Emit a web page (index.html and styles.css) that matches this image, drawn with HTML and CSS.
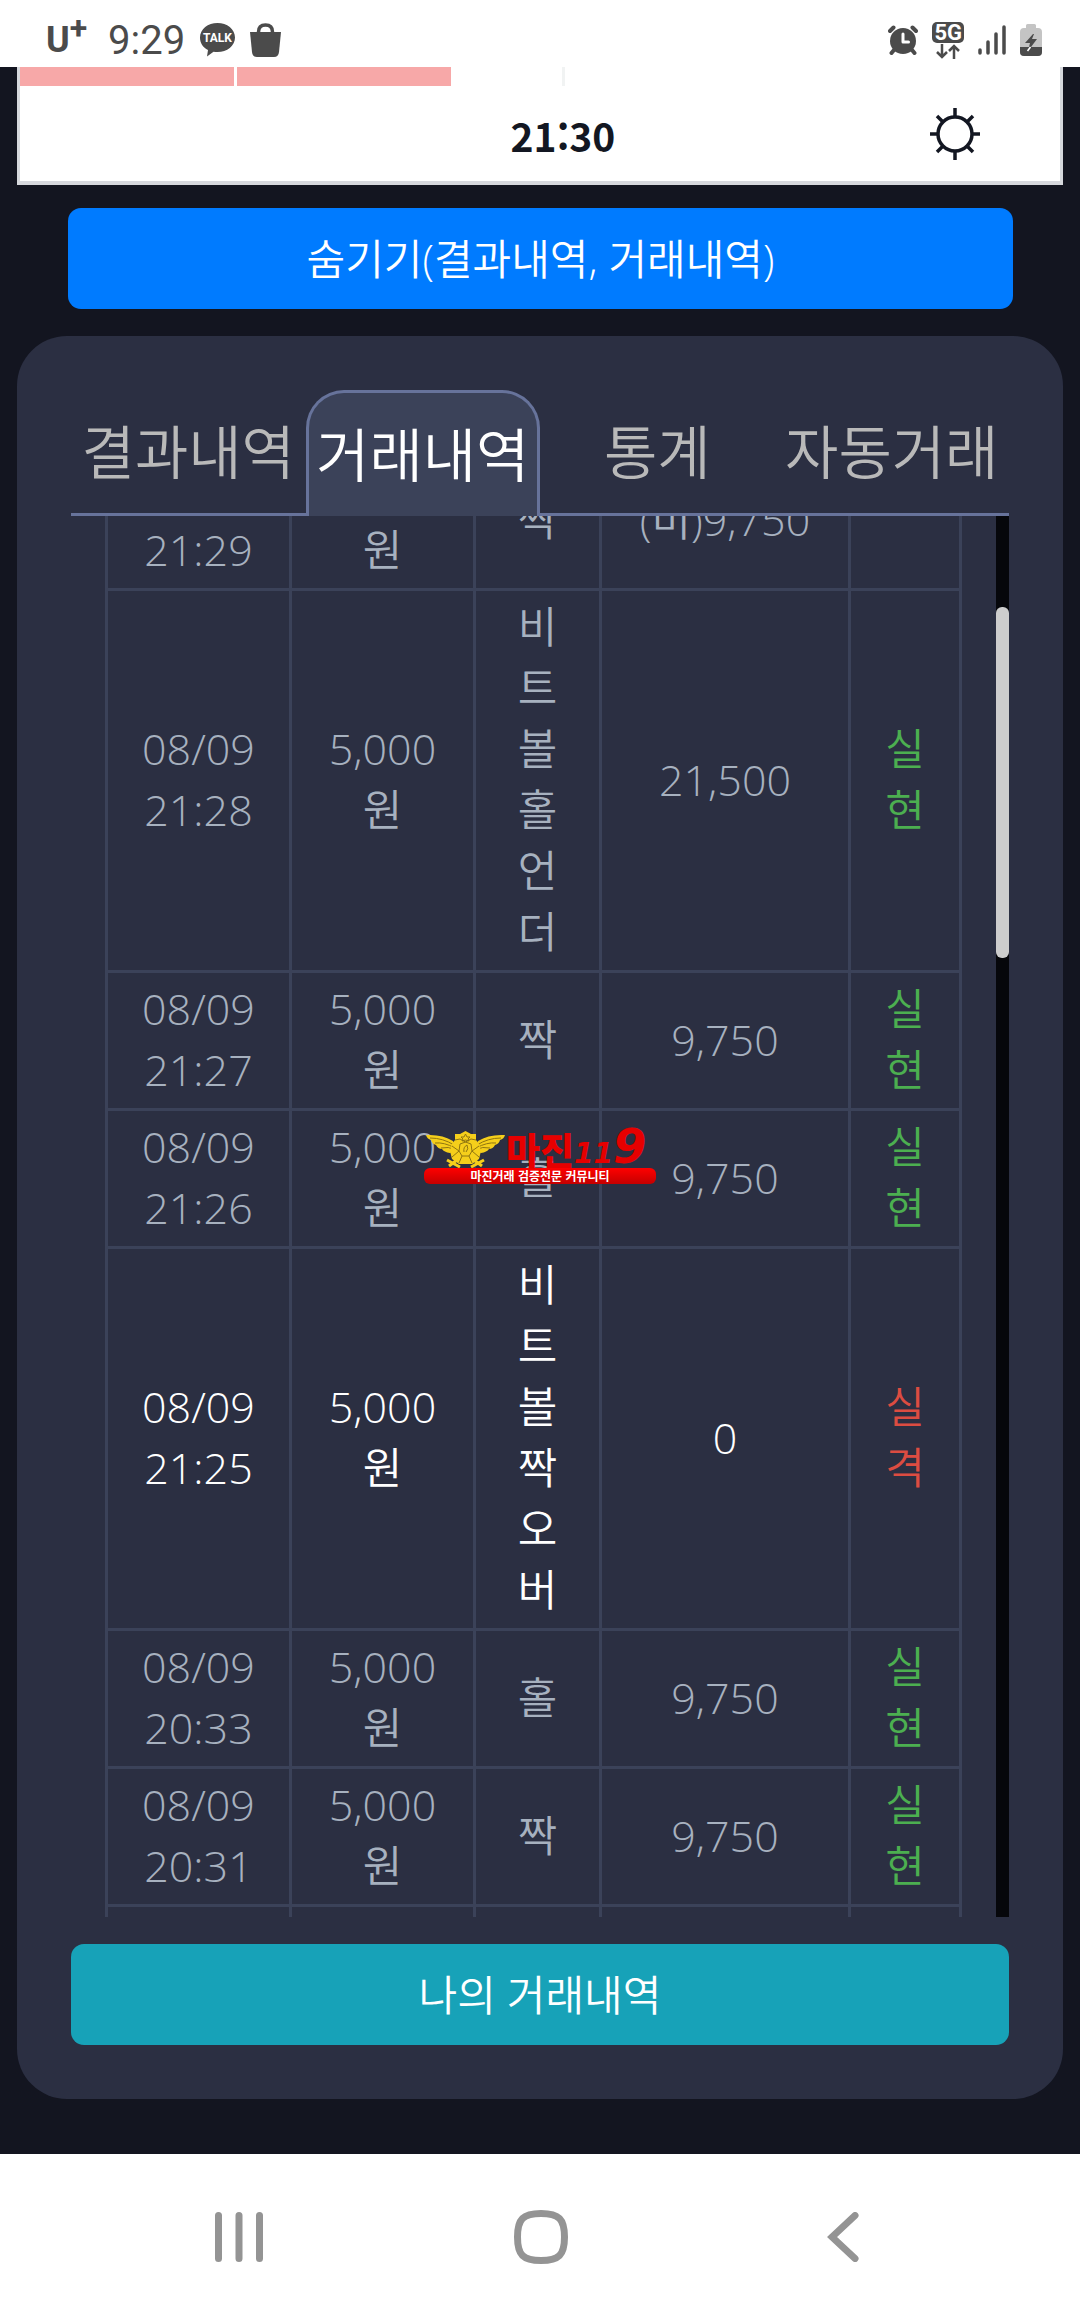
FILE: index.html
```html
<!DOCTYPE html>
<html lang="ko">
<head>
<meta charset="utf-8">
<meta name="viewport" content="width=device-width, initial-scale=1">
<title>거래내역</title>
<link rel="stylesheet" href="styles.css">
</head>
<body>
<header class="status">
  <div class="status-left">
    <span class="carrier">U<sup class="carrier-plus">+</sup></span>
    <span class="clock">9:29</span>
    <span class="talk">
      <svg width="35" height="34" viewBox="0 0 35 34" aria-hidden="true"><path fill="#4b4b4b" d="M17.500 0C27 0 35 6 35 14.500C35 23 27 29 17.500 29C16 29 15 29 13.500 28.700L7 33.500L8 27C3 24.500 0 20 0 14.500C0 6 8 0 17.500 0Z"/></svg>
      <span class="talk-label">TALK</span>
    </span>
    <svg width="31" height="34" viewBox="0 0 31 34" aria-hidden="true"><path fill="#4b4b4b" d="M0 9H31L29 29Q28.500 34 24 34H7Q2.500 34 2 29Z"/><path fill="none" stroke="#4b4b4b" stroke-width="3.500" d="M8.500 11V9Q8.500 2 15.500 2T22.500 9V11"/></svg>
  </div>
  <div class="status-right">
    <svg width="30" height="30" viewBox="0 0 30 30" aria-hidden="true"><circle cx="15" cy="16" r="13" fill="#4b4b4b"/><path stroke="#4b4b4b" stroke-width="4" stroke-linecap="round" fill="none" d="M2 6L5.500 2.500M28 6L24.500 2.500M6 25L3.500 28M24 25L26.500 28"/><path fill="none" stroke="#fff" stroke-width="3" stroke-linecap="round" stroke-linejoin="round" d="M15 9V17H20.500"/></svg>
    <span class="fiveg">
      <span class="fiveg-label">5G</span>
      <svg width="24" height="15" viewBox="0 0 24 15" aria-hidden="true"><path fill="none" stroke="#4b4b4b" stroke-width="2.500" d="M6 0V13M1 8L6 13L11 8M18 15V2M13 7L18 2L23 7"/></svg>
    </span>
    <svg width="28" height="30" viewBox="0 0 28 30" aria-hidden="true"><path stroke="#4b4b4b" stroke-width="3.500" stroke-linecap="round" d="M2 25V28M10 17V28M18 9V28M26 2V28"/></svg>
    <svg width="22" height="32" viewBox="0 0 22 32" aria-hidden="true"><path fill="#c4c4c4" d="M6 4V1.500Q6 0 7.500 0H14.500Q16 0 16 1.500V4H18Q22 4 22 8V28Q22 32 18 32H4Q0 32 0 28V8Q0 4 4 4Z"/><path fill="#4b4b4b" d="M0 23H22V28Q22 32 18 32H4Q0 32 0 28Z"/><path fill="#4b4b4b" d="M13 10L5 19H10L9 23H11L17 15H12L14 10Z"/><path stroke="#fff" stroke-width="1.500" d="M10.500 23L7.500 27"/></svg>
  </div>
</header>

<main class="page">
  <section class="chart">
    <div class="chart-bars"><i class="bar"></i><i class="bar"></i><i class="gridline"></i></div>
    <div class="chart-axis">
      <time class="chart-time">21:30</time>
      <svg class="gear" width="52" height="52" viewBox="0 0 52 52" aria-hidden="true"><g fill="none" stroke="#131722" stroke-width="3.500"><circle cx="26" cy="26" r="17"/><path d="M26 9V0M26 43V52M9 26H1M43 26H51M14 14L8 8M38 14L44 8M14 38L8 44M38 38L44 44"/></g></svg>
    </div>
  </section>

  <button class="btn btn-primary" type="button">숨기기(결과내역, 거래내역)</button>

  <section class="panel">
    <nav class="tabs">
      <a class="tab" href="#result">결과내역</a>
      <a class="tab active" href="#trade">거래내역</a>
      <a class="tab" href="#stats">통계</a>
      <a class="tab" href="#auto">자동거래</a>
    </nav>
    <div class="scroller">
      <div class="viewport">
        <table class="trades">
          <colgroup><col class="c-time"><col class="c-amount"><col class="c-type"><col class="c-result"><col class="c-state"></colgroup>
          <tbody>
            <tr><td>08/09 21:29</td><td>5,000원</td><td>짝</td><td>(미)9,750</td><td></td></tr>
            <tr><td>08/09 21:28</td><td>5,000원</td><td>비트볼홀언더</td><td>21,500</td><td class="win">실현</td></tr>
            <tr><td>08/09 21:27</td><td>5,000원</td><td>짝</td><td>9,750</td><td class="win">실현</td></tr>
            <tr><td>08/09 21:26</td><td>5,000원</td><td>홀</td><td>9,750</td><td class="win">실현</td></tr>
            <tr class="lost"><td>08/09 21:25</td><td>5,000원</td><td>비트볼짝오버</td><td>0</td><td class="lose">실격</td></tr>
            <tr><td>08/09 20:33</td><td>5,000원</td><td>홀</td><td>9,750</td><td class="win">실현</td></tr>
            <tr><td>08/09 20:31</td><td>5,000원</td><td>짝</td><td>9,750</td><td class="win">실현</td></tr>
            <tr><td></td><td></td><td></td><td></td><td></td></tr>
          </tbody>
        </table>
      </div>
      <div class="track"><div class="thumb"></div></div>
    </div>
    <button class="btn btn-info" type="button">나의 거래내역</button>
  </section>

  <div class="mark">
    <div class="mark-top">
      <svg width="80" height="37" viewBox="0 0 80 37" aria-hidden="true">
        <path fill="#f5cf1b" d="M0 4Q16 3 27 10L31 19L24 22Q18 21 16 18Q12 18 10 14Q6 13 5 9Q1 8 0 4ZM79 4Q63 3 52 10L48 19L55 22Q61 21 63 18Q67 18 69 14Q73 13 74 9Q78 8 79 4Z"/>
        <path fill="none" stroke="#8f7510" d="M4 7Q17 7 28 14M9 12Q18 11 29 17M15 17Q22 15 30 19M75 7Q62 7 51 14M70 12Q61 11 50 17M64 17Q57 15 49 19"/>
        <path fill="none" stroke="#f5cf1b" stroke-width="3" d="M21 29L34 36M23 35L31 29M58 29L45 36M56 35L48 29"/>
        <path fill="#f5cf1b" d="M39.500 0L45 3L50 3L50 9L53 13L55 20L53 28L46 33H33L26 28L24 20L26 13L29 9L29 3L34 3Z"/>
        <path fill="none" stroke="#8f7510" d="M29 9L34 8L39.500 11L45 8L50 9M39.500 3L41 6H44L42 8L43 10L39.500 9L36 10L37 8L35 6H38ZM34 13L39.500 11L45 13L46 20L43 25H36L33 20ZM26 15L33 20L26 26M53 15L46 20L53 26M36 25L33 32M43 25L46 32M38 21Q37 16 41 14Q43 18 40 21"/>
      </svg>
      <span class="mark-name">마진</span>
      <span class="mark-num"><span class="mark-small">11</span>9</span>
    </div>
    <div class="mark-banner">마진거래 검증전문 커뮤니티</div>
  </div>
</main>

<footer class="navbar">
  <button class="nav-btn" type="button" aria-label="최근 앱"><svg width="50" height="50" viewBox="0 0 50 50"><path stroke="#949494" stroke-width="7" stroke-linecap="round" d="M4.500 3.500V46.500M25 3.500V46.500M45.500 3.500V46.500"/></svg></button>
  <button class="nav-btn" type="button" aria-label="홈"><svg width="54" height="54" viewBox="0 0 54 54"><path fill="none" stroke="#949494" stroke-width="7" d="M27 3.500C45 3.500 50.500 9 50.500 27S45 50.500 27 50.500S3.500 45 3.500 27S9 3.500 27 3.500Z"/></svg></button>
  <button class="nav-btn" type="button" aria-label="뒤로"><svg width="32" height="50" viewBox="0 0 32 50"><path fill="none" stroke="#949494" stroke-width="7" stroke-linecap="round" d="M28 3.500L5 25L28 46.500"/></svg></button>
</footer>
</body>
</html>
```
FILE: styles.css
```css
* { box-sizing: border-box; }

body {
  margin: 0;
  height: 100vh;
  display: flex;
  flex-direction: column;
  background: #131520;
  font-family: "Open Sans", "Noto Sans CJK KR", sans-serif;
  font-weight: 350;
  font-size: 43px;
}

button { font: inherit; border: 0; padding: 0; }
svg { display: block; flex: none; }

/* Phone status bar */
.status {
  flex: none;
  height: 67px;
  padding: 13px 38px 0 46px;
  display: flex;
  align-items: center;
  justify-content: space-between;
  background: #fff;
  color: #4b4b4b;
  font-family: Roboto, sans-serif;
}
.status-left { display: flex; align-items: center; }
.carrier {
  width: 62px;
  font-size: 36px;
  line-height: 40px;
  font-weight: 700;
  white-space: nowrap;
}
.carrier-plus { font-size: 32px; line-height: 0; }
.clock { width: 92px; font-size: 40px; font-weight: 400; }
.talk { position: relative; margin-right: 15px; }
.talk-label {
  position: absolute;
  left: 0;
  right: 0;
  top: 8px;
  text-align: center;
  color: #fff;
  font-size: 12px;
  line-height: 14px;
  font-weight: 700;
}
.status-right { display: flex; align-items: center; gap: 14px; }
.fiveg { display: flex; flex-direction: column; align-items: center; gap: 1px; }
.fiveg-label {
  padding: 0 2px;
  border-radius: 5px;
  background: #4b4b4b;
  color: #fff;
  font-size: 22px;
  line-height: 21px;
  font-weight: 700;
}

.page {
  position: relative;
  flex: 1;
  min-height: 0;
  padding: 0 17px 55px;
  display: flex;
  flex-direction: column;
}

/* Bottom edge of the chart */
.chart {
  flex: none;
  height: 118px;
  border: solid #d6d8dd;
  border-width: 0 3px 4px;
  background: #fff;
}
.chart-bars { display: flex; gap: 3px; height: 19px; }
.bar { width: 214px; background: #f7a8a8; }
.gridline { width: 3px; margin-left: 108px; background: #f1f3f3; }
.chart-axis {
  position: relative;
  height: 95px;
  padding: 2px 0 0 46px;
  display: flex;
  align-items: center;
  justify-content: center;
  color: #131722;
}
.chart-time {
  font-family: "Noto Sans CJK KR", sans-serif;
  font-size: 39px;
  font-weight: 700;
}
.gear { position: absolute; right: 79px; top: 22px; }

.btn {
  flex: none;
  height: 101px;
  padding-bottom: 5px;
  border-radius: 13px;
  color: #fff;
  font-size: 42px;
}
.btn-primary { margin: 23px 50px 27px 51px; background: #007bff; }
.btn-info { margin-top: 27px; background: #17a2b8; }

.panel {
  flex: 1;
  min-height: 0;
  padding: 54px;
  border-radius: 50px;
  background: #2b2f42;
  display: flex;
  flex-direction: column;
}

.tabs {
  flex: none;
  height: 126px;
  display: grid;
  grid-template-columns: repeat(4, 1fr);
}
.tab {
  display: flex;
  align-items: center;
  justify-content: center;
  padding-bottom: 6px;
  border-bottom: 3px solid #67739b;
  color: #b9b9b9;
  font-size: 58px;
  text-decoration: none;
  white-space: nowrap;
}
.tab.active {
  border: 3px solid #67739b;
  border-bottom: 0;
  border-radius: 38px 38px 0 0;
  background: #3b4259;
  color: #fff;
}

.scroller { flex: 1; min-height: 0; display: flex; }
.viewport { flex: 1; overflow: hidden; padding: 0 34px; }
.track { width: 13px; background: #06070b; }
.thumb { height: 351px; margin-top: 91px; border-radius: 6px; background: #cdcdcd; }

/* Scrolled so the first row is cut by the tab line */
.trades {
  width: 100%;
  margin-top: -66px;
  table-layout: fixed;
  border-collapse: collapse;
  color: #a7b1bf;
  line-height: 61px;
  text-align: center;
}
.trades td { height: 138px; padding: 5px 34px 8px; border: 3px solid #3b4259; }
.c-time, .c-amount { width: 184px; }
.c-type { width: 126px; }
.c-result { width: 249px; }
.c-state { width: 111px; }
.trades .win { color: #4caf50; }
.trades .lost { color: #fff; }
.trades .lose { color: #dc4c41; }

/* Community logo laid over the table */
.mark { position: absolute; left: 424px; top: 1064px; width: 232px; }
.mark-top { display: flex; align-items: center; height: 37px; padding-left: 2px; color: #e60000; white-space: nowrap; }
.mark-name { font-family: "Noto Sans CJK KR", sans-serif; font-size: 37px; line-height: 37px; font-weight: 900; }
.mark-num { font-family: "DejaVu Sans", sans-serif; font-size: 48px; line-height: 37px; font-weight: 700; font-style: italic; }
.mark-small { font-size: 28px; }
.mark-banner {
  height: 16px;
  border-radius: 6px;
  background: linear-gradient(#ff0000, #c40000);
  color: #fff;
  font-family: "Noto Sans CJK KR", sans-serif;
  font-size: 12px;
  line-height: 16px;
  font-weight: 700;
  text-align: center;
}

/* Phone navigation bar */
.navbar {
  flex: none;
  height: 162px;
  padding: 4px 86px 0 88px;
  display: grid;
  grid-template-columns: repeat(3, 1fr);
  background: #fff;
}
.nav-btn { display: flex; align-items: center; justify-content: center; background: none; }
```
